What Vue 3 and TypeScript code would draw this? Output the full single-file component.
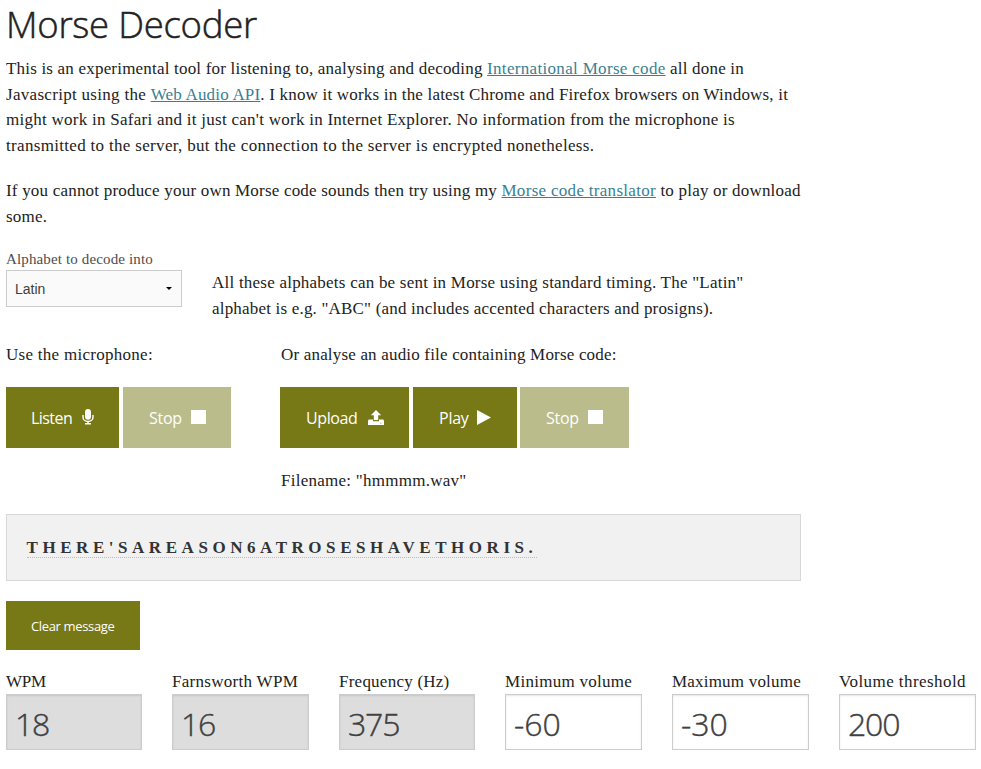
<script setup lang="ts">
interface Field {
  label: string
  value: string
  locked: boolean
  cls: string
}

const fields: Field[] = [
  { label: 'WPM', value: '18', locked: true, cls: 'f1' },
  { label: 'Farnsworth WPM', value: '16', locked: true, cls: 'f2' },
  { label: 'Frequency (Hz)', value: '375', locked: true, cls: 'f3' },
  { label: 'Minimum volume', value: '-60', locked: false, cls: 'f4' },
  { label: 'Maximum volume', value: '-30', locked: false, cls: 'f5' },
  { label: 'Volume threshold', value: '200', locked: false, cls: 'f6' },
]
</script>

<template>
  <main class="page">
    <h1>Morse Decoder</h1>
    <p class="copy">
      <span class="line l1">This is an experimental tool for listening to, analysing and decoding <a>International Morse code</a> all done in</span>
      <span class="line l2"><span class="lead">Javascript using the </span><a>Web Audio API</a>. I know it works in the latest Chrome and Firefox browsers on Windows, it</span>
      <span class="line l3">might work in Safari and it just can't work in Internet Explorer. No information from the microphone is</span>
      <span class="line l4">transmitted to the server, but the connection to the server is encrypted nonetheless.</span>
    </p>
    <p class="copy second">
      <span class="line l5">If you cannot produce your own Morse code sounds then try using my <a>Morse code translator</a> to play or download</span>
      <span class="line l6">some.</span>
    </p>

    <section class="alphabet">
      <div class="picker">
        <label>Alphabet to decode into</label>
        <div class="select">
          <span>Latin</span>
          <svg width="6" height="3" viewBox="0 0 6 3"><path d="M0 0h6L3 3z" fill="#000" /></svg>
        </div>
      </div>
      <p class="copy hint">
        <span class="line l7">All these alphabets can be sent in Morse using standard timing. The "Latin"</span>
        <span class="line l8">alphabet is e.g. "ABC" (and includes accented characters and prosigns).</span>
      </p>
    </section>

    <section class="sources">
      <div class="mic">
        <p class="copy"><span class="line l9">Use the microphone:</span></p>
        <div class="buttons">
          <button class="b-listen"><span>Listen</span>
            <svg width="12" height="16" viewBox="0 0 12 16"><rect x="3" y="0" width="6" height="10.8" rx="3" fill="#fff" /><path d="M1 6v2.2a5 4.3 0 0 0 10 0V6" fill="none" stroke="#fff" stroke-width="1.4" /><path d="M5.2 12h1.6v2H9v1.4H3V14h2.2z" fill="#fff" /></svg>
          </button>
          <button class="b-stop off"><span>Stop</span><i class="square" /></button>
        </div>
      </div>
      <div class="file">
        <p class="copy"><span class="line l10">Or analyse an audio file containing Morse code:</span></p>
        <div class="buttons">
          <button class="b-upload"><span>Upload</span>
            <svg width="16" height="15" viewBox="0 0 16 15"><path d="M8 0l5.2 5.2H10.2V10H5.8V5.2H2.8z" fill="#fff" /><path d="M.8 9.6H5v1.6h6V9.6h4.2l.8 1.2V15H0v-4.2z" fill="#fff" /><path d="M12 12.8h1.6v.8H12z" fill="#a5a660" /></svg>
          </button>
          <button class="b-play"><span>Play</span>
            <svg width="14" height="15" viewBox="0 0 14 15"><path d="M0 0l14 7.5L0 15z" fill="#fff" /></svg>
          </button>
          <button class="b-stop2 off"><span>Stop</span><i class="square" /></button>
        </div>
        <p class="copy filename"><span class="line l11">Filename: "hmmmm.wav"</span></p>
      </div>
    </section>

    <div class="output"><span>THERE'SAREASON6ATROSESHAVETHORIS.</span></div>

    <button class="clear"><span>Clear message</span></button>

    <section class="fields">
      <div v-for="f in fields" :key="f.label" class="field" :class="f.cls">
        <label>{{ f.label }}</label>
        <div class="value" :class="{ locked: f.locked }"><span>{{ f.value }}</span></div>
      </div>
    </section>
  </main>
</template>

<style>
body { background: #fff; }
</style>

<style scoped>
.page {
  box-sizing: border-box;
  width: 981px;
  height: 769px;
  padding: 0 5px 0 6px;
  overflow: hidden;
  color: #222;
  font-family: "Liberation Serif", serif;
  font-size: 17px;
}
h1 { margin: 0; height: 56px; font: 300 36.5px/48px "Open Sans", sans-serif; letter-spacing: -0.25px; -webkit-text-stroke: 0.5px #222; white-space: nowrap; }
p { margin: 0 0 20px; }
.second { margin-bottom: 16px; }
.copy { line-height: 25.6px; }
.line { display: block; white-space: nowrap; }
.l1 { letter-spacing: 0.195px; }
.l1 a { letter-spacing: 0.32px; }
.l2 { letter-spacing: 0.19px; }
.l2 .lead { letter-spacing: 0.3px; }
.l3 { letter-spacing: 0.264px; }
.l4 { letter-spacing: 0.32px; }
.l5 { letter-spacing: 0.2px; }
.l5 a { letter-spacing: 0.3px; }
.l6 { letter-spacing: 0.2px; }
.l7 { letter-spacing: 0.227px; }
.l8 { letter-spacing: 0.19px; }
.l9 { letter-spacing: 0.28px; }
.l10 { letter-spacing: 0.18px; padding-left: 1px; }
.l11 { letter-spacing: 0.26px; padding-left: 1px; }
a { color: #3a7f93; text-decoration: underline; }
.alphabet { display: flex; height: 96px; }
.picker { width: 206px; padding-top: 3px; }
.picker label { display: block; font-size: 15px; line-height: 21px; letter-spacing: 0.14px; color: #4d4d4d; white-space: nowrap; }
.select { box-sizing: border-box; display: flex; align-items: center; justify-content: space-between; width: 176px; height: 37px; padding: 1px 9px 0 8px; border: 1px solid #ccc; background: #fafafa; font: 14px "Liberation Sans", sans-serif; color: #404040; }
.hint { padding-top: 24.4px; margin: 0; }
.sources { display: flex; height: 172px; }
.mic { width: 274px; }
.buttons { display: flex; gap: 4px; }
button { box-sizing: border-box; display: flex; align-items: center; justify-content: space-between; height: 61px; margin: 0; padding: 0 25px 0 26px; border: 0; border-radius: 0; background: #777816; color: #fff; font: 400 16px "Open Sans", sans-serif; white-space: nowrap; }
button svg, .square { margin-bottom: 1px; }
.off { background: #bbbc8b; }
.square { width: 15px; height: 14px; background: #fff; }
.b-listen { width: 113px; letter-spacing: -0.55px; padding-left: 25px; }
.b-stop { width: 108px; letter-spacing: -0.25px; }
.b-upload { width: 129px; letter-spacing: -0.4px; }
.b-play { width: 104px; letter-spacing: -0.25px; padding-right: 26px; }
.b-stop2 { width: 109px; letter-spacing: -0.25px; margin-left: -1px; padding-right: 26px; }
.filename { padding-top: 20px; }
.output { box-sizing: border-box; width: 795px; height: 67px; padding: 20px 19.5px; border: 1px solid #d8d8d8; background: #f1f1f1; font-weight: bold; letter-spacing: 4.55px; color: #333; line-height: 25px; white-space: nowrap; }
.output span { border-bottom: 1px dotted #bbb; }
.clear { margin-top: 20px; width: 134px; height: 49px; font-size: 13px; letter-spacing: -0.35px; padding: 1px 0 0 25px; }
.fields { display: grid; grid-template-columns: 136px 137px 136px 137px 137px 137px; column-gap: 30px; margin-top: 19px; }
.field label { display: block; line-height: 25px; white-space: nowrap; }
.f1 label { letter-spacing: -0.3px; }
.f2 label { letter-spacing: 0.29px; }
.f3 label { letter-spacing: 0.24px; }
.f4 label { letter-spacing: 0.27px; }
.f5 label { letter-spacing: 0.2px; }
.f6 label { letter-spacing: 0.43px; }
.value { box-sizing: border-box; height: 56px; padding: 1px 0 0 8px; border: 1px solid #ccc; box-shadow: inset 0 1px 2px rgba(0,0,0,.1); font: 300 32px/56px "Open Sans", sans-serif; -webkit-text-stroke: 0.4px #404040; letter-spacing: -1.2px; color: #404040; }
.f4 .value, .f5 .value { letter-spacing: 0; }
.locked { background: #ddd; }
</style>
